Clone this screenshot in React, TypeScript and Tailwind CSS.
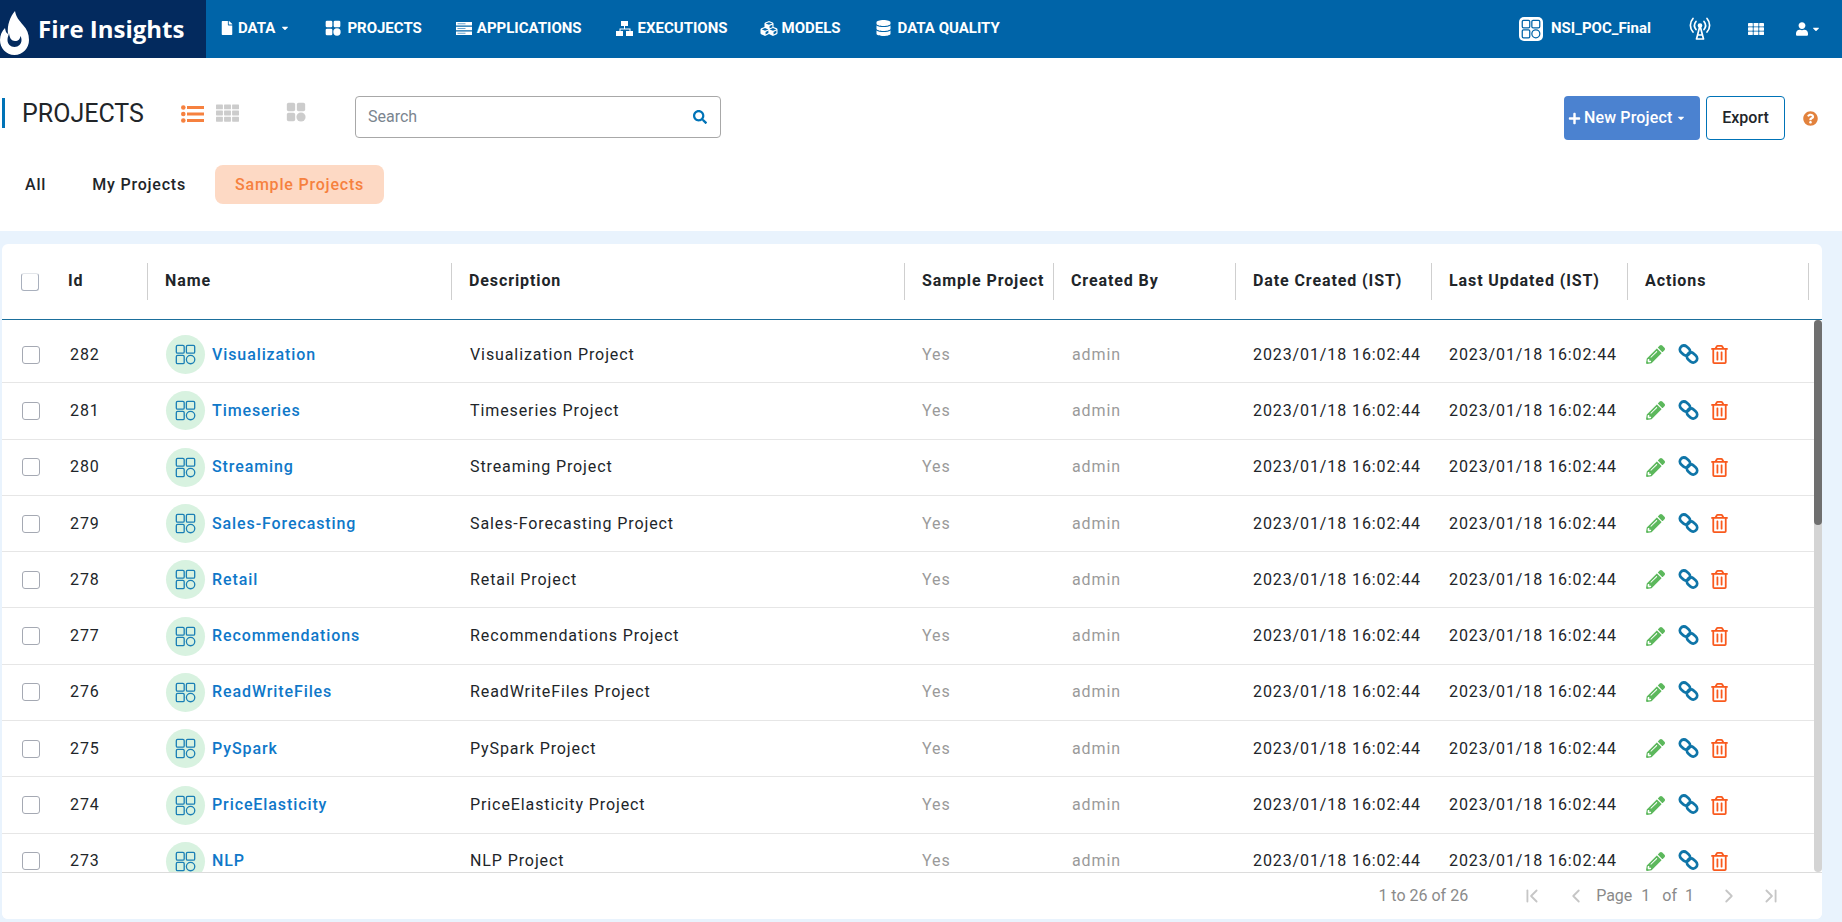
import React from "react";
import { FaFile, FaCubes, FaDatabase, FaUser, FaCaretDown, FaSearch, FaPlus, FaQuestionCircle, FaPencilAlt, FaRegTrashAlt } from "react-icons/fa";
import { ChevronLeft, ChevronRight, ChevronFirst, ChevronLast } from "lucide-react";

const GRID = "grid grid-cols-[145px_304px_453px_149px_182px_196px_196px_182px]";

type IC = { className?: string };

function Proj({ className = "" }: IC) {
  return (
    <svg viewBox="0 0 24 24" className={className} fill="none" stroke="currentColor" strokeWidth="1.5">
      <rect x="1.500" y="1.500" width="9" height="9" rx="1.500" />
      <rect x="13" y="1.500" width="9.500" height="9" rx="1.500" />
      <rect x="1.500" y="13" width="9" height="9.500" rx="1.500" />
      <circle cx="17.800" cy="17.800" r="4.800" />
    </svg>
  );
}

function Solid4({ className = "" }: IC) {
  return (
    <svg viewBox="0 0 24 24" className={className} fill="currentColor">
      <rect x="1" y="1" width="10" height="10" rx="2" />
      <rect x="13" y="1" width="10" height="10" rx="2" />
      <rect x="1" y="13" width="10" height="10" rx="2" />
      <circle cx="18" cy="18" r="5.500" />
    </svg>
  );
}

function Flame({ className = "" }: IC) {
  return (
    <svg viewBox="0 0 29 44" className={className} fill="currentColor">
      <path fillRule="evenodd" d="M15 0c1 6 4 9 8 14 4 4 6 9 6 15 0 8-6 15-14.500 15S0 37 0 29c0-5 2-9 5-12 .5 3 1 5 3 6C7 14 10 6 15 0zM9 22c-.5 3-1.500 4-1.500 7 0 4 3 7 7 7s7-3 7-7c0-2-.5-3-1-4-.5 3-2 5-5.500 5S9.500 27 9 22z" />
    </svg>
  );
}

function Tower({ className = "" }: IC) {
  return (
    <svg viewBox="0 0 22 23" className={className} fill="none" stroke="currentColor" strokeWidth="1.700" strokeLinecap="round" strokeLinejoin="round">
      <path d="M4 1.500C.5 5.500.5 11 4 15" />
      <path d="M18 1.500c3.500 4 3.500 9.500 0 13.500" />
      <path d="M7 4.500c-2 2.500-2 5.500 0 8" />
      <path d="M15 4.500c2 2.500 2 5.500 0 8" />
      <circle cx="11" cy="8.500" r="1.500" fill="currentColor" />
      <path d="M10.500 10.500 7.500 22h7l-3-11.500M8.500 18h5" />
    </svg>
  );
}

function Stack({ className = "" }: IC) {
  return (
    <svg viewBox="0 0 16 13" className={className} fill="currentColor">
      <path d="M0 0h16v3.500H0zM0 4.700h16v3.500H0zM0 9.400h16V13H0z" />
      <path d="M1.500 1.300h8v1h-8zM1.500 6h8v1h-8zM1.500 10.700h8v1h-8z" fill="#6aa5cf" />
    </svg>
  );
}

function Net({ className = "" }: IC) {
  return (
    <svg viewBox="0 0 17 15" className={className} fill="currentColor">
      <path d="M5 0h7v5H5zM0 10h7v5H0zM10 10h7v5h-7z" />
      <path d="M8 5h1v2.500h5.500V10h-1V8.500h-9V10h-1V7.500H8z" />
    </svg>
  );
}

function Dots({ className = "" }: IC) {
  return (
    <svg viewBox="0 0 16 12" className={className} fill="currentColor">
      {[0, 4.300, 8.600].map((y) =>
        [0, 5.600, 11.200].map((x) => <rect key={x + "-" + y} x={x} y={y} width="4.800" height="3.400" rx=".4" />)
      )}
    </svg>
  );
}

function ListIc({ className = "" }: IC) {
  return (
    <svg viewBox="0 0 23 18" className={className} fill="currentColor">
      <circle cx="2.300" cy="2.500" r="2.300" />
      <circle cx="2.300" cy="9" r="2.300" />
      <circle cx="2.300" cy="15.500" r="2.300" />
      <rect x="6" y="1" width="17" height="3" />
      <rect x="6" y="7.500" width="17" height="3" />
      <rect x="6" y="14" width="17" height="3" />
    </svg>
  );
}

function Chain({ className = "" }: IC) {
  return (
    <svg viewBox="0 0 21 20" className={className} fill="none" stroke="currentColor" strokeWidth="2.800">
      <rect x="1.500" y="2.500" width="11" height="8" rx="4" transform="rotate(42 7 6.500)" />
      <rect x="8.500" y="9.500" width="11" height="8" rx="4" transform="rotate(42 14 13.500)" />
    </svg>
  );
}

const nav: [React.ComponentType<IC>, string, string, string, string][] = [
  [FaFile, "DATA", "w-[12px] h-[14px]", "ml-[5px]", "ml-[15px]"],
  [Solid4, "PROJECTS", "w-[16px] h-[16px]", "ml-[6px]", "ml-[35px]"],
  [Stack, "APPLICATIONS", "w-[16px] h-[13px]", "ml-[5px]", "ml-[34px]"],
  [Net, "EXECUTIONS", "w-[17px] h-[15px]", "ml-[5px]", "ml-[34px]"],
  [FaCubes, "MODELS", "w-[20px] h-[17px]", "ml-[3px]", "ml-[31px]"],
  [FaDatabase, "DATA QUALITY", "w-[15px] h-[16px]", "ml-[7px]", "ml-[35px]"],
];

const names: [number, string][] = [
  [282, "Visualization"],
  [281, "Timeseries"],
  [280, "Streaming"],
  [279, "Sales-Forecasting"],
  [278, "Retail"],
  [277, "Recommendations"],
  [276, "ReadWriteFiles"],
  [275, "PySpark"],
  [274, "PriceElasticity"],
  [273, "NLP"],
];

const heads = ["Name", "Description", "Sample Project", "Created By", "Date Created (IST)", "Last Updated (IST)"];

function Box({ faint = false }: { faint?: boolean }) {
  return <span className={"block w-[18px] h-[18px] rounded-[3px] border bg-white " + (faint ? "border-[#a9b0bd] border-t-[#e3e6ea]" : "border-[#a5a9b3]")} />;
}

export default function App() {
  return (
    <div className="h-[922px] w-full overflow-hidden bg-[#e9f3fd] font-[Roboto,sans-serif] text-[#212529] flex flex-col">
      <header className="h-[58px] bg-[#0064a8] flex items-center text-white shrink-0">
        <div className="h-full w-[206px] bg-[#032a5e] flex items-center">
          <Flame className="w-[29px] h-[44px] mt-[8px]" />
          <span className="ml-[9px] text-[24px] leading-none font-bold font-['Open_Sans',sans-serif]">Fire Insights</span>
        </div>
        <nav className="flex items-center text-[15px] font-bold -mt-[2px]">
          {nav.map(([I, t, ic, gap, ml], i) => (
            <div key={t} className={"flex items-center " + ml}>
              <I className={ic} />
              <span className={gap}>{t}</span>
              {i === 0 && <FaCaretDown className="ml-[5px] w-[10px] h-[10px]" />}
            </div>
          ))}
        </nav>
        <div className="ml-auto flex items-center -mt-[1px]">
          <span className="w-[24px] h-[24px] rounded-[5px] bg-white text-[#0064a8] flex items-center justify-center">
            <Proj className="w-[20px] h-[20px]" />
          </span>
          <span className="ml-[8px] text-[15px] font-bold">NSI_POC_Final</span>
          <Tower className="ml-[38px] w-[22px] h-[23px]" />
          <Dots className="ml-[37px] w-[16px] h-[12px]" />
          <FaUser className="ml-[32px] w-[12px] h-[14px]" />
          <FaCaretDown className="ml-[3px] mr-[21px] w-[10px] h-[10px]" />
        </div>
      </header>

      <section className="h-[173px] bg-white shrink-0 flex flex-col">
        <div className="h-[82px] pt-[38px] flex items-start">
          <div className="ml-[2px] w-[3px] h-[30px] mt-[2px] bg-[#0073b7]" />
          <h1 className="ml-[17px] w-[159px] text-[25px] leading-[36px] font-normal text-[#212529]">PROJECTS</h1>
          <ListIc className="mt-[9px] w-[23px] h-[18px] text-[#f6813f]" />
          <Dots className="ml-[12px] mt-[8px] w-[23px] h-[18px] text-[#cccccc]" />
          <Solid4 className="ml-[47px] mt-[6px] w-[20px] h-[20px] text-[#cccccc]" />
          <div className="ml-[49px] w-[366px] h-[42px] border border-[#a8a8a8] rounded-[4px] flex items-center px-[12px]">
            <span className="text-[16px] text-[#7b858f]">Search</span>
            <FaSearch className="ml-auto w-[14px] h-[14px] text-[#0073b7] mr-[1px]" />
          </div>
          <div className="ml-auto flex items-center">
            <button className="w-[136px] h-[44px] rounded-[4px] bg-[#4b82d0] text-white text-[16px] font-medium tracking-[0.15px] flex items-center justify-start pl-[4px]">
              <FaPlus className="w-[13px] h-[13px] mr-[3px]" />New Project<FaCaretDown className="ml-[4px] w-[10px] h-[10px]" />
            </button>
            <button className="ml-[6px] w-[79px] h-[44px] rounded-[4px] border border-[#0073b7] bg-white text-[16px] font-medium text-[#212529]">Export</button>
            <FaQuestionCircle className="ml-[18px] mr-[24px] w-[15px] h-[15px] text-[#e2823d]" />
          </div>
        </div>
        <div className="mt-[25px] flex items-center h-[39px] text-[16px] font-medium tracking-[0.8px]">
          <span className="ml-[25px]">All</span>
          <span className="ml-[46px]">My Projects</span>
          <span className="ml-[29px] h-[39px] w-[169px] flex items-center justify-center rounded-[8px] bg-[#fdd9c4] text-[#f6813f]">Sample Projects</span>
        </div>
      </section>

      <main className="mt-[13px] ml-[2px] w-[1820px] h-[675px] bg-white rounded-[6px] flex flex-col overflow-hidden shrink-0">
        <div className={GRID + " h-[76px] border-b border-[#1b6f9c] items-center text-[16px] font-bold tracking-[0.9px] shrink-0"}>
          <div className="flex items-center h-[37px]">
            <span className="ml-[19px]"><Box faint /></span>
            <span className="ml-[29px] -mt-[2px]">Id</span>
          </div>
          {heads.map((h) => (
            <div key={h} className="h-[37px] border-l border-[#cfcfcf] pl-[17px] pb-[2px] flex items-center whitespace-nowrap">{h}</div>
          ))}
          <div className="h-[37px] border-x border-[#cfcfcf] pl-[17px] pb-[2px] flex items-center">Actions</div>
        </div>
        <div className="relative flex-1 min-h-0 overflow-hidden pt-[7px]">
          <div className="absolute right-0 top-0 bottom-0 w-[8px] rounded-[5px] bg-[#d4d4d4] z-10">
            <div className="h-[205px] w-full rounded-[5px] bg-[#6f6f6f]" />
          </div>
          {names.map(([id, n]) => (
            <div key={id} className={GRID + " h-[56.3px] border-b border-[#e6e6e6] items-center text-[16px] tracking-[0.9px]"}>
              <div className="flex items-center">
                <span className="ml-[20px]"><Box /></span>
                <span className="ml-[30px]">{id}</span>
              </div>
              <div className="flex items-center pl-[19px]">
                <span className="w-[39px] h-[39px] rounded-full bg-[#d8f2e0] text-[#1a7fb5] flex items-center justify-center">
                  <Proj className="w-[21px] h-[21px]" />
                </span>
                <span className="ml-[7px] text-[#0f78c9] font-medium">{n}</span>
              </div>
              <div className="pl-[19px]">{n} Project</div>
              <div className="pl-[18px] text-[#9a9a9a]">Yes</div>
              <div className="pl-[19px] text-[#9a9a9a]">admin</div>
              <div className="pl-[18px] whitespace-nowrap">2023/01/18 16:02:44</div>
              <div className="pl-[18px] whitespace-nowrap">2023/01/18 16:02:44</div>
              <div className="pl-[19px] flex items-center">
                <FaPencilAlt className="w-[19px] h-[19px] text-[#5cb85c]" />
                <Chain className="ml-[13px] w-[21px] h-[20px] text-[#0f75a8] -mt-[2px]" />
                <FaRegTrashAlt className="ml-[12px] w-[17px] h-[19px] text-[#f9591d]" />
              </div>
            </div>
          ))}
        </div>
        <div className="h-[47px] border-t border-[#dcdcdc] flex items-center justify-end text-[16px] text-[#8a8a8a] shrink-0 bg-white">
          <span className="mr-[53px]">1 to 26 of 26</span>
          <ChevronFirst className="w-[22px] h-[22px] text-[#c6c6c6]" />
          <ChevronLeft className="ml-[22px] w-[22px] h-[22px] text-[#c6c6c6]" />
          <span className="ml-[9px]">Page</span>
          <span className="ml-[9px]">1</span>
          <span className="ml-[12px]">of</span>
          <span className="ml-[8px]">1</span>
          <ChevronRight className="ml-[24px] w-[22px] h-[22px] text-[#c6c6c6]" />
          <ChevronLast className="ml-[20px] mr-[40px] w-[22px] h-[22px] text-[#c6c6c6]" />
        </div>
      </main>
    </div>
  );
}
